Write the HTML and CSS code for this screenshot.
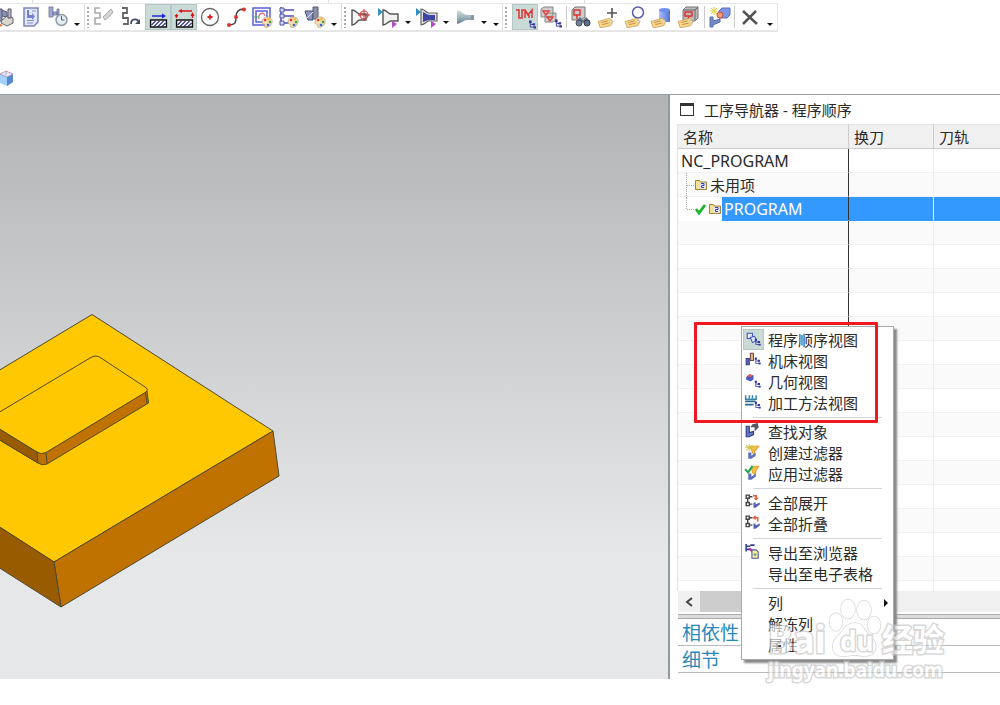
FILE: index.html
```html
<!DOCTYPE html>
<html lang="zh-CN">
<head>
<meta charset="utf-8">
<title>工序导航器</title>
<link rel="stylesheet" href="styles.css">
</head>
<body>
<svg class="defs" aria-hidden="true">
  <defs>
    <linearGradient id="blue" x1="0" x2="1"><stop offset="0" stop-color="#a9c1fb"/><stop offset="1" stop-color="#5271d8"/></linearGradient>
    <linearGradient id="steel" x1="0" y1="0" x2="0" y2="1"><stop offset="0" stop-color="#d5e1e6"/><stop offset=".5" stop-color="#a3b5be"/><stop offset="1" stop-color="#66808e"/></linearGradient>
    <symbol id="stock" viewBox="0 0 18 9"><path d="M1 1h16v7H1z" fill="#fff"/><path d="M2 6l4-4M4 8l6-6M8 8l6-6M12 8l4-4" stroke="#343488" stroke-width="1.200"/><path d="M1 1h16v7H1z" fill="none" stroke="#111" stroke-width="1.500"/></symbol>
    <symbol id="palette" viewBox="0 0 12 12"><path d="M1 6C1 2 5 .5 8 1.200S12 5 10.500 8 6 11.800 4 11.200 5 9 3.500 8.500 1 8 1 6z" fill="#f1ddb2" stroke="#b99b6f" stroke-width=".7"/><circle cx="4" cy="4" r="1.300" fill="#e33"/><circle cx="7.600" cy="3.200" r="1.200" fill="#f5b921"/><circle cx="9" cy="6" r="1.200" fill="#36a345"/><circle cx="7" cy="9" r="1.300" fill="#3365dd"/></symbol>
    <symbol id="tag" viewBox="0 0 16 10"><path d="M1 4L12 1l3 3-2 4L3 10z" fill="#f7d68c" stroke="#c99a50" stroke-width=".7"/><path d="M4 5l6-1.500M5 7l6-1.500" stroke="#b8863d" stroke-width=".8"/><circle cx="13" cy="4" r="1" fill="#fff" stroke="#999" stroke-width=".4"/></symbol>
    <symbol id="folder" viewBox="0 0 12 11"><path d="M.5 10.500V1.500h4l1 1.500h6v7.500z" fill="#f3e092" stroke="#9b8540"/><path d="M5 4h5v5.500H5z" fill="#e7e6f5"/><path d="M6 4.500h3v2H6.500v2H9" fill="none" stroke="#3942c6"/></symbol>
    <symbol id="tree" viewBox="0 0 8 9"><path d="M1.500 0v7.500h4M2 4.500h3" fill="none" stroke="#3438a0"/><path d="M0 0h3v3H0zM4 3h3v2.500H4zM5 6.500h3V9H5z" fill="#3438a0"/></symbol>
  </defs>
</svg>
<div class="app">
  <div class="strip"><span></span><span></span><span></span></div>
  <header class="toolbar">
    <div class="group first">
      <button aria-label="刀具"><svg viewBox="0 0 24 24"><path d="M5 4h4v12H5zM9 5l5 2v5l-5-1" fill="#8d93b4" stroke="#555b78"/><path d="M9 15l5-4 6 2v5l-6 3-6-3z" fill="#d8d8ce" stroke="#666"/><path d="M15 4h3v9h-3z" fill="#bbc" stroke="#556"/><path d="M4 18l5 3" stroke="#f46a2c" stroke-width="2"/></svg></button>
      <button aria-label="车间文档"><svg viewBox="0 0 24 24"><path d="M5 3h14v14l-4 4H5z" fill="#e2e7f8" stroke="#7b86ba" stroke-width="1.500"/><path d="M8 5h2v5h3V8l3 3.500-3 3.500v-2H8z" fill="#7383d2"/><path d="M13 6h4M8 15.500h7M8 18h6" stroke="#8791b6" fill="none"/></svg></button>
      <button aria-label="后处理"><svg viewBox="0 0 24 24"><path d="M4 2h4v10H4zM8 7h4v3H8zM12 4h2v6h-2z" fill="#a1a8ce" stroke="#686f9e" stroke-width=".8"/><circle cx="16.500" cy="15" r="5.500" fill="#e5edf2" stroke="#8d9aa4" stroke-width="1.500"/><path d="M16.500 11v4h3" fill="none" stroke="#566"/></svg></button>
      <button class="arrow" aria-label="更多"></button>
    </div>
    <div class="group loose"><i class="grip"></i>
      <button aria-label="编辑刀轨"><svg viewBox="0 0 24 24"><path d="M8 3H3v5h5v5H3v6h6" fill="none" stroke="#aaa" stroke-width="1.600"/><path d="M11 12l5-5 3-3 2 3-3 4-5 4z" fill="#d5d5d5" stroke="#aaa"/></svg></button>
      <button aria-label="重播刀轨"><svg viewBox="0 0 24 24"><path d="M3 3h5v5H4v5h5v6H4" fill="none" stroke="#666" stroke-width="1.800"/><path d="M12 19c0-6 7-6 8-1" fill="none" stroke="#45486f" stroke-width="1.800"/><path d="M16 19h5v-5z" fill="#45486f"/></svg></button>
      <button class="on" aria-label="进给方向"><svg viewBox="0 0 24 24"><use href="#stock" x="3.500" y="14" width="18" height="9"/><path d="M6 11h11" stroke="#1822d8" stroke-width="1.400"/><path d="M16 8.500l4 2.500-4 2.500z" fill="#1822d8"/></svg></button>
      <button class="on" aria-label="刀轨边界"><svg viewBox="0 0 24 24"><use href="#stock" x="3.500" y="14" width="18" height="9"/><path d="M4.500 13V9M8 6h12M20.500 13V9" fill="none" stroke="#d91515" stroke-width="1.300"/><path d="M2.500 10l2 3 2-3zM10 4L6 6l4 2zM18.500 11l2-4 2 4z" fill="#d91515"/></svg></button>
      <button aria-label="圆"><svg viewBox="0 0 24 24"><circle cx="12" cy="12" r="8.500" fill="none" stroke="#666" stroke-width="1.300"/><path d="M12 9.500v5M9.500 12h5" stroke="#d22" stroke-width="1.800"/></svg></button>
      <button aria-label="曲线"><svg viewBox="0 0 24 24"><path d="M4 20c8 0 8-3 8-8s2-8 8-8" fill="none" stroke="#444" stroke-width="1.500"/><circle cx="5" cy="20" r="2" fill="#d33"/><circle cx="12" cy="12" r="2" fill="#d33"/><circle cx="20" cy="4.500" r="2" fill="#d33"/></svg></button>
      <button aria-label="轮廓显示"><svg viewBox="0 0 24 24"><path d="M3 3h17v17H3zM6 6h11v11H6z" fill="none" stroke="#5a5ed5" stroke-width="1.500"/><path d="M9 14c-1-6 5-8 6-3" fill="none" stroke="#d66" stroke-width="1.200"/><path d="M4 12h5" stroke="#3b5"/><use href="#palette" x="11" y="11" width="12" height="12"/></svg></button>
      <button aria-label="树显示"><svg viewBox="0 0 24 24"><path d="M5 2v18M8 5h10M8 11h10M8 18h5" fill="none" stroke="#4850af" stroke-width="1.400"/><path d="M4 3h4v4H4zM4 9h4v4H4zM4 16h4v4H4z" fill="#d8daf5" stroke="#4850af"/><use href="#palette" x="11" y="11" width="12" height="12"/></svg></button>
      <button aria-label="刀具显示"><svg viewBox="0 0 24 24"><path d="M3 6h8v9H6z" fill="#8d95c0" stroke="#444d78"/><path d="M11 2h5v12h-5z" fill="#8b91a3" stroke="#555d75"/><path d="M4 14l7-7" stroke="#e6e9f4"/><use href="#palette" x="12" y="11" width="12" height="12"/></svg></button>
      <button class="arrow low" aria-label="更多"></button>
    </div>
    <div class="group loose"><i class="grip"></i>
      <button aria-label="机床定位"><svg viewBox="0 0 24 24"><path d="M3 5c4 0 5 4 8 4h6v6h-6c-3 0-4 5-8 5z" fill="#f5f5f5" stroke="#555" stroke-width="1.400"/><circle cx="15" cy="10" r="4" fill="none" stroke="#d44" stroke-width="1.200"/><path d="M15 4v12M9 10h12" stroke="#b33"/></svg></button>
      <button aria-label="起点"><svg viewBox="0 0 24 24"><path d="M7 5c4 0 5 4 8 4h7v7h-7c-3 0-4 4-8 4z" fill="#f2f2f2" stroke="#555" stroke-width="1.400"/><path d="M2 3l5 4-5 4z" fill="#338fc4"/><path d="M16 16l5 3-5 4z" fill="#b44ac5"/></svg></button>
      <button class="arrow" aria-label="起点选项"></button>
      <button aria-label="终点"><svg viewBox="0 0 24 24"><path d="M6 4c4 0 5 4 8 4h8v8h-8c-3 0-4 4-8 4z" fill="#ddd" stroke="#666" stroke-width="1.200"/><path d="M8 7c3 1 4 3 7 3h5v5h-5c-3 0-4 1-7 2z" fill="#3e45a4"/><path d="M1 3l5 4-5 4z" fill="#338fc4"/><path d="M16 16l5 3-5 4z" fill="#b44ac5"/></svg></button>
      <button class="arrow" aria-label="终点选项"></button>
      <button aria-label="刀轴"><svg viewBox="0 0 24 24"><path d="M4 5c5 1 7 5 10 5h6v5h-6c-3 0-5 3-10 4z" fill="url(#steel)"/><path d="M18 10h3v5h-3z" fill="#8799a3"/></svg></button>
      <button class="arrow" aria-label="刀轴选项"></button><button class="arrow lower" aria-label="更多"></button>
    </div>
    <div class="group wide"><i class="grip"></i>
      <button class="on lead" aria-label="程序顺序视图"><svg viewBox="0 0 24 24"><path d="M3 5h3v8h3V5h3v8M12 5l3 5 4-5v8M16 10v3" fill="none" stroke="#d33" stroke-width="1.500"/><use href="#tree" x="16" y="15" width="7" height="9"/></svg></button>
      <button aria-label="机床视图"><svg viewBox="0 0 24 24"><path d="M2 4l3-2h9v8l-3 2H2zM6 10l3-2h8v7l-3 2H6z" fill="#d0ccca" stroke="#888"/><path d="M4 6h6l-3 4zM8 12h6l-3 4z" fill="none" stroke="#d44" stroke-width="1.400"/><use href="#tree" x="16" y="14" width="7" height="9"/></svg></button>
      <i class="sep"></i>
      <button aria-label="查找"><svg viewBox="0 0 24 24"><path d="M3 5l3-3h10v10l-4 3H3z" fill="#ccc" stroke="#777"/><path d="M5 5h6v5H5zM8 10v4" fill="none" stroke="#d33" stroke-width="1.500"/><path d="M7 16l4-4 3 3 3-3 4 4-5 2z" fill="#637086"/><circle cx="10" cy="18" r="3" fill="#738099" stroke="#444c5b"/><circle cx="18" cy="18" r="3" fill="#637089" stroke="#343c4b"/></svg></button>
      <button aria-label="添加"><svg viewBox="0 0 24 24"><path d="M16 3v10M11 8h10" stroke="#555" stroke-width="1.600"/><use href="#tag" x="1" y="12" width="17" height="11"/></svg></button>
      <button aria-label="查看标签"><svg viewBox="0 0 24 24"><circle cx="15" cy="7.500" r="5.500" fill="none" stroke="#575eaa" stroke-width="1.500"/><use href="#tag" x="1" y="12" width="17" height="11"/></svg></button>
      <button aria-label="毛坯"><svg viewBox="0 0 24 24"><path d="M9 5v12h11V5z" fill="url(#blue)"/><ellipse cx="14.500" cy="5" rx="5.500" ry="2" fill="#6f8ef0"/><use href="#tag" x="0" y="12" width="17" height="11"/></svg></button>
      <button aria-label="工件"><svg viewBox="0 0 24 24"><path d="M6 5l3-3h12v11l-3 3H6z" fill="#bbb" stroke="#777"/><path d="M6 5h12v10M18 5l3-3" fill="none" stroke="#666"/><path d="M8 7h7v4H8zM11.500 11v5" fill="none" stroke="#d33" stroke-width="1.500"/><use href="#tag" x="0" y="12" width="17" height="11"/></svg></button>
      <i class="sep"></i>
      <button aria-label="新建对象"><svg viewBox="0 0 24 24"><path d="M12 6l3-3h8v7l-3 3h-8z" fill="#7e96e6" stroke="#5d70bf"/><path d="M3 12h3v4l7-2v3l-7 3v2H3z" fill="#7288c8" stroke="#5d70a8"/><path d="M7 2v8M3 6h8M4 3l6 6M10 3L4 9" stroke="#e4d13e"/><circle cx="13" cy="10" r="3" fill="#ed9c7b" stroke="#d34e3d"/></svg></button>
      <i class="sep"></i>
      <button aria-label="删除"><svg viewBox="0 0 24 24"><path d="M6 6l14 13M19 6L6 19" stroke="#555" stroke-width="2.500"/></svg></button>
      <button class="arrow low" aria-label="更多"></button>
    </div>
  </header>
  <div class="subbar"><svg class="cube" viewBox="0 0 14 16"><path d="M0 4l6-3 7 3v8l-6 4-7-3z" fill="#a2d2fa"/><path d="M7 7l6-3v8l-6 4z" fill="#5788d2"/><path d="M0 4l6-3 7 3-6 3zM6 1v4" fill="#e0edff" stroke="#b77b93" stroke-width=".7"/></svg></div>
  <main class="work">
    <section class="viewport" aria-label="模型">
      <svg class="model" viewBox="0 95 668 584" preserveAspectRatio="xMinYMin meet">
        <g stroke="#4f4831" stroke-width="1" stroke-linejoin="round">
          <path d="M-2 371L92 314.500 273 431 54 562-2 526z" fill="#ffc800"/>
          <path d="M54 562L273 431l6 45L61 607z" fill="#c07200"/>
          <path d="M-2 526L54 562l7 45L-2 567z" fill="#995b00"/>
          <path d="M-2 428L37 452Q41 455 46 452L147 391l1.500 12L47 464Q42 466 38 463L-2 439z" fill="#c07200"/>
          <path d="M-2 428L37 452l1 11L-2 439z" fill="#995b00"/>
          <path d="M-2 413L90 358Q96 354 101 358L145 387Q149 389 146 392L46 452.500Q41 455 37 452L-2 428z" fill="#ffc800"/>
          <path d="M46 453l1 10M145.500 393l1.500 10" fill="none"/>
        </g>
      </svg>
    </section>
    <aside class="panel">
      <h1 class="title"><i class="window"></i>工序导航器 - 程序顺序</h1>
      <div class="grid">
        <table>
          <colgroup><col class="c-name"><col class="c-tool"><col></colgroup>
          <thead><tr><th>名称</th><th>换刀</th><th>刀轨</th></tr></thead>
          <tbody>
            <tr><td class="root">NC_PROGRAM</td><td></td><td></td></tr>
            <tr><td><div class="node"><i class="branch"></i><svg class="folder"><use href="#folder"/></svg><span>未用项</span></div></td><td></td><td></td></tr>
            <tr class="selected"><td><div class="node"><i class="branch last"></i><svg class="check" viewBox="0 0 12 12"><path d="M1 6l3 4 6-8" fill="none" stroke="#17b52b" stroke-width="2.800"/></svg><svg class="folder"><use href="#folder"/></svg><span>PROGRAM</span></div></td><td></td><td></td></tr>
            <tr><td></td><td></td><td></td></tr><tr><td></td><td></td><td></td></tr><tr><td></td><td></td><td></td></tr><tr><td></td><td></td><td></td></tr><tr><td></td><td></td><td></td></tr>
            <tr><td></td><td></td><td></td></tr><tr><td></td><td></td><td></td></tr><tr><td></td><td></td><td></td></tr><tr><td></td><td></td><td></td></tr><tr><td></td><td></td><td></td></tr>
            <tr><td></td><td></td><td></td></tr><tr><td></td><td></td><td></td></tr><tr><td></td><td></td><td></td></tr><tr><td></td><td></td><td></td></tr><tr><td></td><td></td><td></td></tr><tr><td></td><td></td><td></td></tr>
          </tbody>
        </table>
      </div>
      <div class="scroll"><button aria-label="向左滚动"><svg viewBox="0 0 10 12"><path d="M8 2L3 6l5 4" fill="none" stroke="#444" stroke-width="2"/></svg></button><i class="thumb"></i></div>
      <div class="splitter"></div>
      <button class="section">相依性</button>
      <button class="section">细节</button>

      <ul class="menu">
        <li><button><svg class="on" viewBox="0 0 20 20"><path d="M4 4h5v5H4z" fill="#dfe8f4" stroke="#4656b5"/><path d="M7 8l4-1 2 4-4 2z" fill="#dfe8f4" stroke="#4656b5"/><use href="#tree" x="11" y="9" width="6" height="7"/></svg>程序顺序视图</button></li>
        <li><button><svg viewBox="0 0 20 20"><path d="M3 8h3v6H3z" fill="#5367bb" stroke="#343d81"/><path d="M7 3h3v7H7z" fill="#e3b286" stroke="#744b45"/><use href="#tree" x="11" y="7" width="6" height="7"/></svg>机床视图</button></li>
        <li><button><svg viewBox="0 0 20 20"><path d="M3 6l3-3 4 1v4l-3 2-4-2z" fill="#4c59c2"/><path d="M4 5l2-2 4 1-3 2z" fill="#e35b50"/><use href="#tree" x="11" y="9" width="6" height="7"/></svg>几何视图</button></li>
        <li><button><svg viewBox="0 0 20 20"><path d="M2.500 3v4h10V3M6 3v3M9 3v3" fill="none" stroke="#3783ab" stroke-width="1.400"/><path d="M2 9h10M2 12h8" stroke="#26698d" stroke-width="1.600"/><use href="#tree" x="11" y="9" width="6" height="7"/></svg>加工方法视图</button></li>
        <li class="rule"></li>
        <li><button><svg viewBox="0 0 20 20"><path d="M3 5h3v6l4-1v3l-4 2H3z" fill="#6174c5" stroke="#323e84"/><path d="M7 6l2-3 5-1 1 4-4 4V6z" fill="#555a65"/></svg>查找对象</button></li>
        <li><button><svg viewBox="0 0 20 20"><path d="M7 4h8l-4 5v4l-2-3z" fill="#f7bd3e" stroke="#dfa23c"/><path d="M5 10h3v3l4-3v3l-4 3H5z" fill="#5d70bd"/><path d="M6 2v7M2 5h8M3 3l6 5M9 3L3 8" stroke="#d6c43e"/></svg>创建过滤器</button></li>
        <li><button><svg viewBox="0 0 20 20"><path d="M8 3h7l-3 5v4L9 9z" fill="#f7bd3e" stroke="#dfa23c"/><path d="M5 10h3v3l4-3v3l-4 3H5z" fill="#5d70bd"/><path d="M2 6l3 3 4-6" fill="none" stroke="#22a844" stroke-width="2"/></svg>应用过滤器</button></li>
        <li class="rule"></li>
        <li><button><svg viewBox="0 0 20 20"><path d="M3 3h3v3H3zM3 10h3v3H3zM4.500 6v4M6 4.500h3M6 11.500h3" fill="none" stroke="#444" stroke-width="1.300"/><path d="M9.500 3.500h3V6" fill="none" stroke="#e35b36" stroke-width="1.500"/><path d="M10 5.500h5L12.500 8z" fill="#e35b36"/><path d="M10 10h2v2l4-2v2l-4 3h-2z" fill="#535eb5"/></svg>全部展开</button></li>
        <li><button><svg viewBox="0 0 20 20"><path d="M3 3h3v3H3zM3 10h3v3H3zM4.500 6v4M6 4.500h3M6 11.500h3" fill="none" stroke="#444" stroke-width="1.300"/><path d="M11 4.500h3V8" fill="none" stroke="#e35b36" stroke-width="1.500"/><path d="M12 2v5L9 4.500z" fill="#e35b36"/><path d="M10 10h2v2l4-2v2l-4 3h-2z" fill="#535eb5"/></svg>全部折叠</button></li>
        <li class="rule"></li>
        <li><button><svg viewBox="0 0 20 20"><path d="M3 2v7M3 4h4M3 7h4M7 3h4" fill="none" stroke="#333a92" stroke-width="1.500"/><path d="M6 6l4 4" stroke="#c52eaa" stroke-width="2.200"/><path d="M8.500 7.500h4l2 2v6h-6z" fill="#fff08b" stroke="#4b51b7"/><circle cx="11.500" cy="12" r="1.500" fill="#78b1a2"/></svg>导出至浏览器</button></li>
        <li><button><svg viewBox="0 0 20 20"></svg>导出至电子表格</button></li>
        <li class="rule"></li>
        <li><button class="more"><svg viewBox="0 0 20 20"></svg>列</button></li>
        <li><button><svg viewBox="0 0 20 20"></svg>解冻列</button></li>
        <li><button><svg viewBox="0 0 20 20"></svg>属性</button></li>
      </ul>
      <div class="marker"></div>
      <div class="watermark" aria-hidden="true">
        <div class="brand"><span class="latin">Bai</span><svg viewBox="0 0 54 60"><g fill="#fff" stroke="#c4c4c4" stroke-width="1.500"><ellipse cx="8" cy="24" rx="6.500" ry="9"/><ellipse cx="20" cy="11" rx="7" ry="9.500"/><ellipse cx="36" cy="12" rx="7" ry="9.500"/><ellipse cx="46" cy="27" rx="6.500" ry="8.500"/><path d="M27 25c8 0 9 8 16 14 9 8 4 19-5 19-7 0-8-1-12-1s-8 2-13 1c-9-1-11-12-4-19 6-6 9-14 18-14z"/></g><text x="12" y="53">du</text></svg><span>经验</span></div>
        <div class="site">jingyan.baidu.com</div>
      </div>
    </aside>
  </main>
</div>
</body>
</html>
```
FILE: styles.css
```css
* { box-sizing: border-box; }
body { margin: 0; background: #fff; color: #2a2a2a; font: 15px/20px "Noto Sans", "Noto Sans CJK SC", sans-serif; }
button { display: block; margin: 0; padding: 0; border: 0; background: none; color: inherit; font: inherit; text-align: left; }
svg { display: block; flex: none; }
.defs { position: absolute; width: 0; height: 0; }
.app { display: flex; flex-direction: column; height: 100vh; padding-bottom: 26px; overflow: hidden; }

.strip { display: flex; height: 3px; }
.strip span { width: 33px; border-right: 1px solid #ddd; }
.strip span:nth-child(2) { width: 296px; }
.strip span:nth-child(3) { width: 256px; }
.toolbar { display: flex; align-self: flex-start; height: 29px; border: 1px solid #e6e6e6; border-left: 0; border-bottom-width: 2px; }
.group { display: flex; align-items: center; }
.group + .group { border-left: 1px solid #ddd; }
.toolbar button { width: 26px; height: 26px; padding: 1px; }
.toolbar button svg { width: 24px; height: 24px; }
.first button:first-child { margin-left: -8px; }
.loose .grip + button, .loose .grip + button + button:not(.on), .wide button { width: 27px; }
.toolbar .on { width: 26px; padding: 0; border: 1px solid #b4c9c5; background: #c9dad7; }
.toolbar .lead { margin-left: 3px; }
.grip { width: 6px; height: 22px; background: radial-gradient(circle, #aaa 1px, transparent 1px) 0 0 / 6px 4px; }
.sep { width: 1px; height: 22px; margin: 0 1px; background: #ccc; }
.toolbar .arrow { width: 12px; padding: 10px 0 0 3px; }
.toolbar .arrow::before { content: ""; display: block; width: 0; border: 3px solid transparent; border-top-color: #111; border-bottom: 0; }
.first .arrow, .toolbar .low { width: 14px; padding: 14px 0 0 4px; }
.toolbar .lower { padding-top: 14px; }

.subbar { height: 62px; padding-top: 38px; }
.cube { width: 14px; height: 16px; }

.work { display: grid; grid-template-columns: minmax(0, 1fr) 332px; flex: 1; min-height: 0; border-top: 1px solid #999fa2; }
.viewport { overflow: hidden; background: linear-gradient(#b2b3b5, #e6e7e9 78%); }
.model { width: 100%; }
.panel { position: relative; display: flex; flex-direction: column; min-height: 0; padding-left: 8px; border-left: 2px solid #8f9a9e; }
.title { display: flex; align-items: center; gap: 10px; height: 29px; margin: 0; padding-left: 2px; font-size: 15px; font-weight: 400; }
.window { width: 14px; height: 13px; border: 1px solid #333; border-top-width: 3px; }
.grid { flex: 1; min-height: 0; margin-left: -1px; overflow: hidden; border-left: 1px solid #e2e2e2; }
table { width: 100%; border-collapse: separate; border-spacing: 0; table-layout: fixed; }
.c-name { width: 171px; }
.c-tool { width: 85px; }
th { height: 25px; padding: 0 5px; background: #f0f0f0; border: solid #ccc; border-width: 1px 1px 1px 0; border-top-color: #e5e5e5; font-weight: 400; text-align: left; }
td { height: 24px; padding: 0 3px; border-right: 1px solid #eee; border-bottom: 1px solid #f0f0f0; line-height: 20px; }
td:first-child { border-right-color: #333; }
th:last-child, td:last-child { border-right: 0; }
tr:nth-child(even) td { background: #fafafa; }
.root { font-size: 16px; }
.selected td { background: #3399ff; border-bottom-color: #3399ff; }
.selected td:first-child { padding-right: 0; border-bottom-color: transparent; background: linear-gradient(90deg, #fff 44px, #39f 44px); }
.selected span { color: #fff; font-size: 16px; }
.node { display: flex; align-items: center; gap: 3px; height: 23px; padding-left: 5px; }
.folder { width: 12px; height: 11px; }
.check { width: 12px; height: 12px; margin-right: -1px; }
.branch { align-self: stretch; width: 8px; margin-right: -2px; border-left: 1px dotted #aaa; }
.branch::before { content: ""; display: block; height: 12px; border-bottom: 1px dotted #aaa; }
.last { align-self: flex-start; height: 12px; }
.scroll { display: flex; height: 22px; background: #f0f0f0; border-bottom: 1px solid #fff; }
.scroll button { width: 22px; padding: 5px 6px; }
.scroll svg { width: 10px; height: 12px; }
.thumb { width: 100px; background: #cdcdcd; }
.splitter { height: 5px; margin-top: 1px; border: solid #aaa; border-width: 1px 0; background: #ddd; }
.section { height: 27px; padding: 2px 0 0 4px; border-bottom: 1px solid #bbb; color: #2889b9; font-size: 19px; line-height: 24px; }
.section:nth-of-type(2) { margin-bottom: 6px; }

.menu { position: absolute; left: 71px; top: 231px; width: 153px; margin: 0; padding: 2px 1px 4px; list-style: none; background: #fff; border: 1px solid #aaa; box-shadow: 3px 3px 2px #888; }
.menu button { display: flex; align-items: center; gap: 4px; width: 100%; height: 21px; white-space: nowrap; }
.menu button svg { width: 21px; height: 21px; }
.menu .on { background: #c9dad7; outline: 1px solid #b4c9c5; outline-offset: -1px; }
.rule { height: 8px; margin: 0 10px; border: solid transparent; border-width: 4px 0 3px; background: #d5d5d5; background-clip: padding-box; }
.more::after { content: ""; margin-left: auto; margin-right: 4px; border: 4px solid transparent; border-left-color: #111; border-right: 0; }
.marker { position: absolute; left: 24px; top: 227px; width: 184px; height: 101px; border: 3px solid #f01822; border-radius: 1px; }

.watermark { position: absolute; left: 98px; top: 504px; color: #fff; opacity: .65; -webkit-text-stroke: 3px #c4c4c4; paint-order: stroke; font-weight: 700; pointer-events: none; }
.brand { display: flex; align-items: flex-end; height: 59px; font-size: 31px; line-height: 38px; white-space: nowrap; }
.latin { width: 60px; font-size: 37px; }
.brand svg { width: 54px; height: 60px; font-size: 26px; }
.brand text { fill: #fff; stroke: #c4c4c4; stroke-width: 3px; paint-order: stroke; }
.site { font-size: 19px; line-height: 24px; }
```
